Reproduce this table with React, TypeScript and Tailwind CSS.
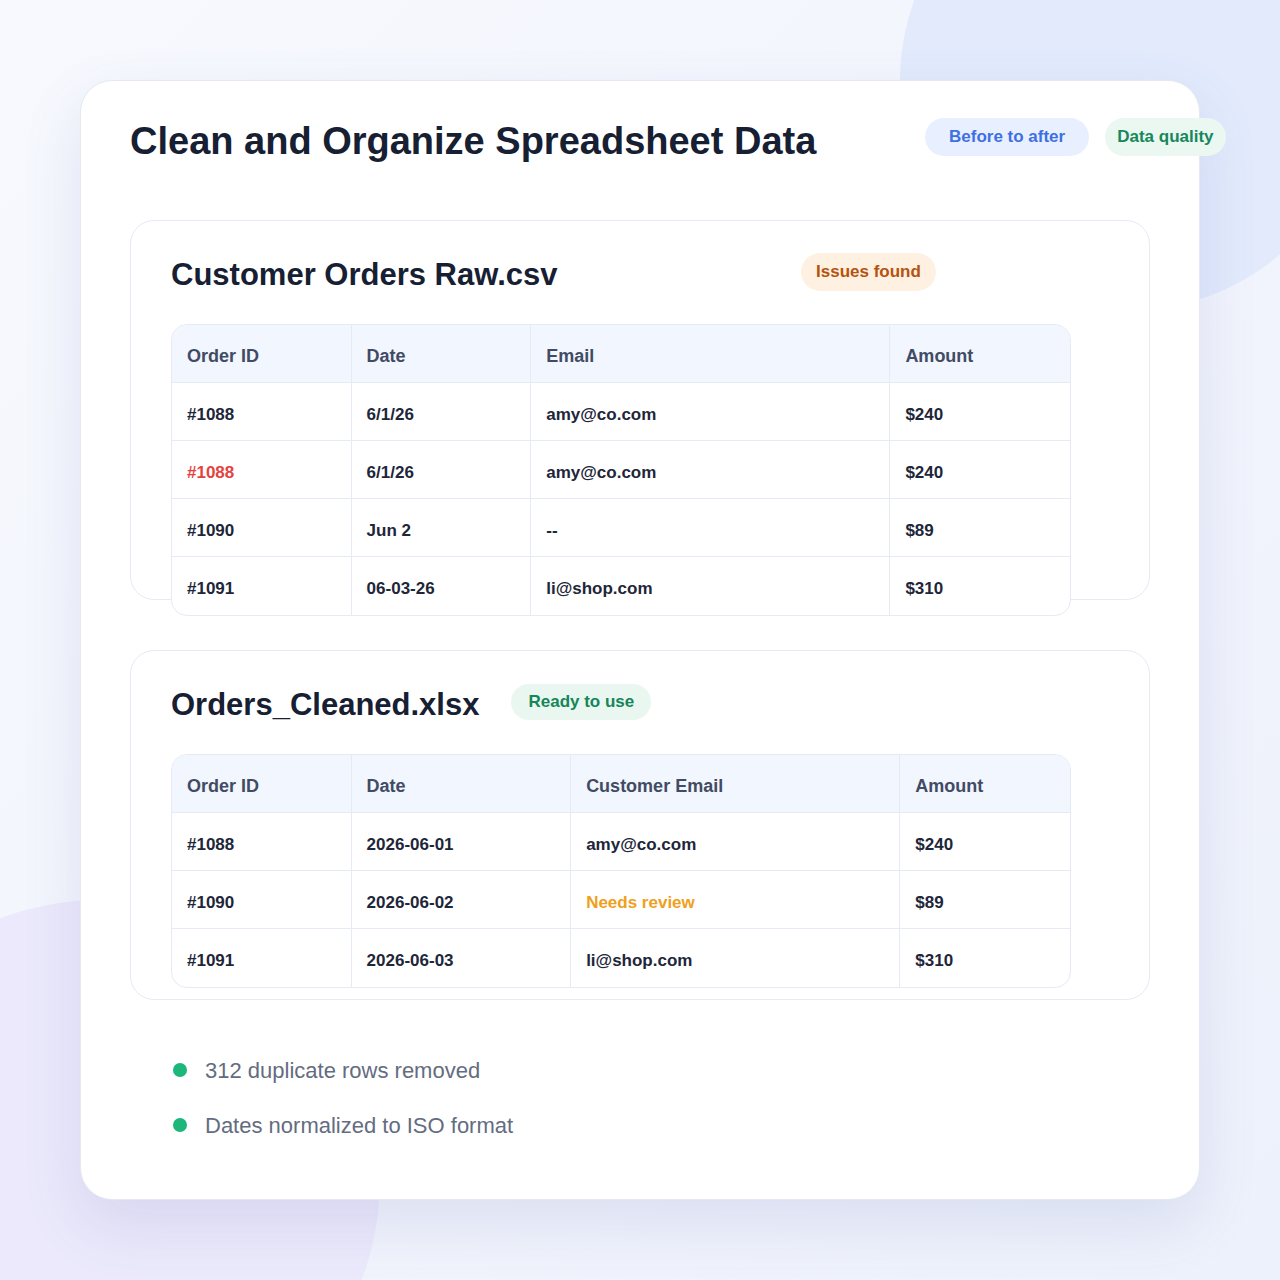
import React from "react";

type Cell = { text: string; tone?: "red" | "amber" };

const rawCols = ["w-[180px]", "w-[180px]", "w-[360px]", "w-[180px]"];
const cleanCols = ["w-[180px]", "w-[220px]", "w-[330px]", "w-[170px]"];

const rawHead = ["Order ID", "Date", "Email", "Amount"];
const rawRows: Cell[][] = [
	[{ text: "#1088" }, { text: "6/1/26" }, { text: "amy@co.com" }, { text: "$240" }],
	[{ text: "#1088", tone: "red" }, { text: "6/1/26" }, { text: "amy@co.com" }, { text: "$240" }],
	[{ text: "#1090" }, { text: "Jun 2" }, { text: "--" }, { text: "$89" }],
	[{ text: "#1091" }, { text: "06-03-26" }, { text: "li@shop.com" }, { text: "$310" }],
];

const cleanHead = ["Order ID", "Date", "Customer Email", "Amount"];
const cleanRows: Cell[][] = [
	[{ text: "#1088" }, { text: "2026-06-01" }, { text: "amy@co.com" }, { text: "$240" }],
	[{ text: "#1090" }, { text: "2026-06-02" }, { text: "Needs review", tone: "amber" }, { text: "$89" }],
	[{ text: "#1091" }, { text: "2026-06-03" }, { text: "li@shop.com" }, { text: "$310" }],
];

const toneClass = (tone?: string) => {
	if (tone === "red") return "text-[#e5423f]";
	if (tone === "amber") return "text-[#f0a01c]";
	return "text-[#1e2639]";
};

const DataTable: React.FC<{ cols: string[]; head: string[]; rows: Cell[][] }> = ({ cols, head, rows }) => {
	return (
		<div className="w-[900px] rounded-2xl border border-[#e6eaf3] bg-white overflow-hidden">
			<div className="flex h-[58px] bg-[#f2f6fe] border-b border-[#e6eaf3]">
				{head.map((h, i) => (
					<div
						key={i}
						className={`${cols[i]} flex items-center px-[15px] pt-[6px] text-[18px] font-bold text-[#414b63] ${i < 3 ? "border-r border-[#e6eaf3]" : ""}`}
					>
						{h}
					</div>
				))}
			</div>
			{rows.map((row, r) => (
				<div key={r} className={`flex h-[58px] ${r < rows.length - 1 ? "border-b border-[#e6eaf3]" : ""}`}>
					{row.map((c, i) => (
						<div
							key={i}
							className={`${cols[i]} flex items-center px-[15px] pt-[6px] text-[17px] font-bold ${toneClass(c.tone)} ${i < 3 ? "border-r border-[#e6eaf3]" : ""}`}
						>
							{c.text}
						</div>
					))}
				</div>
			))}
		</div>
	);
};

const App: React.FC = () => {
	return (
		<div
			className="relative w-[1280px] h-[1280px] overflow-hidden bg-gradient-to-br from-[#f7f9fe] to-[#edf1fb]"
			style={{ fontFamily: '"Liberation Sans", Arial, sans-serif' }}
		>
			{/* background blobs */}
			<div className="absolute left-[900px] top-[-150px] w-[460px] h-[460px] rounded-full bg-[#e2eafc]" />
			<div className="absolute left-[-180px] top-[900px] w-[560px] h-[560px] rounded-full bg-[#ebe9fb]" />

			<div className="relative p-20">
				<div className="w-[1120px] h-[1120px] rounded-[32px] border border-[#e4e8f1] bg-white shadow-[0_24px_60px_rgba(90,100,180,0.14)] px-[49px] pt-[37px]">
					{/* header */}
					<div className="flex items-center h-[38px]">
						<h1 className="w-[795px] shrink-0 pt-[7px] text-[38px] font-bold text-[#172033] whitespace-nowrap leading-none">
							Clean and Organize Spreadsheet Data
						</h1>
						<div className="flex items-center gap-4 shrink-0">
							<span className="h-[38px] px-6 flex items-center rounded-full bg-[#e8efff] text-[17px] font-bold text-[#3e6fe3]">
								Before to after
							</span>
							<span className="h-[38px] px-3 flex items-center rounded-full bg-[#ebf7f1] text-[17px] font-bold text-[#17875c]">
								Data quality
							</span>
						</div>
					</div>

					{/* raw file */}
					<div className="mt-16 h-[380px] rounded-3xl border border-[#e6eaf3] bg-white px-10 pt-8">
						<div className="flex items-center h-[38px]">
							<h2 className="w-[630px] shrink-0 pt-[5px] text-[31px] font-bold text-[#172033] leading-none">
								Customer Orders Raw.csv
							</h2>
							<span className="h-[38px] px-[15px] flex items-center rounded-full bg-[#fff1e2] text-[17px] font-bold text-[#b4530f]">
								Issues found
							</span>
						</div>
						<div className="mt-[33px]">
							<DataTable cols={rawCols} head={rawHead} rows={rawRows} />
						</div>
					</div>

					{/* cleaned file */}
					<div className="mt-[50px] h-[350px] rounded-3xl border border-[#e6eaf3] bg-white px-10 pt-8">
						<div className="flex items-center h-[38px] gap-8">
							<h2 className="pt-[5px] text-[31px] font-bold text-[#172033] leading-none">Orders_Cleaned.xlsx</h2>
							<span className="h-[36px] px-[17px] flex items-center rounded-full bg-[#e9f7f0] text-[17px] font-bold text-[#16855a]">
								Ready to use
							</span>
						</div>
						<div className="mt-[33px]">
							<DataTable cols={cleanCols} head={cleanHead} rows={cleanRows} />
						</div>
					</div>

					{/* notes */}
					<div className="mt-[54px] pl-[43px] flex flex-col gap-[23px]">
						<div className="flex items-center gap-[18px] h-8">
							<span className="size-[14px] rounded-full bg-[#1db67b]" />
							<span className="text-[22px] text-[#646c80]">312 duplicate rows removed</span>
						</div>
						<div className="flex items-center gap-[18px] h-8">
							<span className="size-[14px] rounded-full bg-[#1db67b]" />
							<span className="text-[22px] text-[#646c80]">Dates normalized to ISO format</span>
						</div>
					</div>
				</div>
			</div>
		</div>
	);
};

export default App;
